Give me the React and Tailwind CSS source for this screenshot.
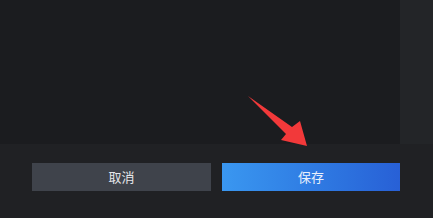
import React from 'react';

// Annotation arrow drawn over the dialog footer
function PointerArrow() {
  return (
    <svg
      className="absolute left-0 top-0 pointer-events-none"
      width="433"
      height="218"
      viewBox="0 0 433 218"
    >
      <polygon
        points="248,96 292,127 300,121 307,146 281,140 286,134"
        fill="#f2393a"
      />
    </svg>
  );
}

export default function App() {
  return (
    <div
      className="relative w-[433px] h-[218px] overflow-hidden bg-[#202124]"
      style={{ fontFamily: '"Noto Sans CJK SC", "Noto Sans", sans-serif' }}
    >
      <div className="flex h-[144px]">
        <div className="w-[400px] bg-[#1b1c1f]" />
        <div className="flex-1 bg-[#232528]" />
      </div>
      <div className="flex gap-[11px] pl-[32px] pt-[19px]">
        <button className="w-[179px] h-[28px] bg-[#3f434b] text-[13px] text-[#e4e6ea] flex items-center justify-center">
          取消
        </button>
        <button className="w-[178px] h-[28px] bg-gradient-to-r from-[#3a97f0] to-[#2860d6] text-[13px] text-[#e8f0fc] flex items-center justify-center">
          保存
        </button>
      </div>
      <PointerArrow />
    </div>
  );
}
